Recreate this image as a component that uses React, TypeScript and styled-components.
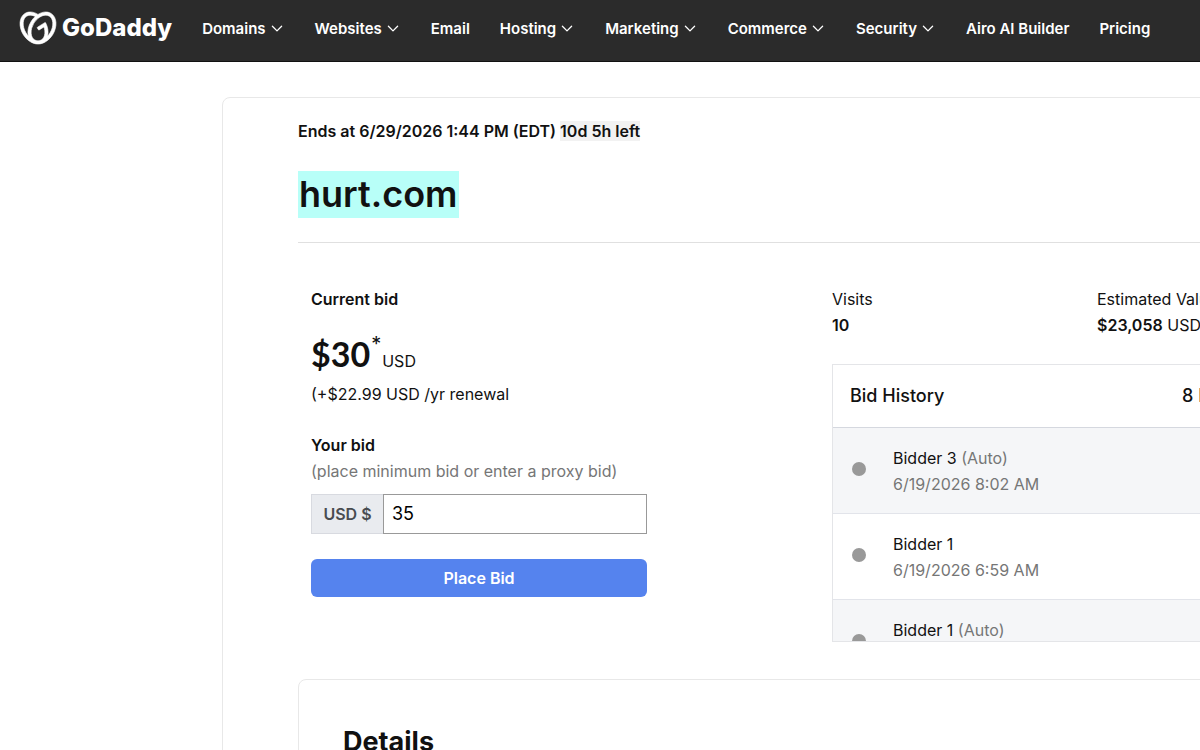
import React from 'react';
import styled, { createGlobalStyle } from 'styled-components';
import { SiGodaddy } from 'react-icons/si';

const GlobalStyle = createGlobalStyle`
  *, *::before, *::after { box-sizing: border-box; }
  body {
    margin: 0;
    background: #fff;
    color: #111;
    font: 400 16px/26px Inter, "Liberation Sans", sans-serif;
  }
  h1, h2, h3, p, ul, dl, dd { margin: 0; padding: 0; }
`;

const Page = styled.div`
  overflow: hidden;
`;

const TopBar = styled.header`
  display: flex;
  align-items: center;
  gap: 30px;
  padding: 10px 20px 15px;
  background: #2b2b2b;
  border-bottom: 1px solid #111;
  color: #fff;
`;

const Brand = styled.a`
  display: flex;
  align-items: center;
  gap: 6px;
  flex: none;
  color: inherit;
  text-decoration: none;
  font: 800 24px/36px Inter, "Liberation Sans", sans-serif;

  & > svg {
    overflow: visible;
    stroke-width: 0.4px;
  }
`;

const NavList = styled.ul`
  display: flex;
  gap: 30px;
  padding-top: 2px;
  list-style: none;
`;

const NavButton = styled.button`
  display: flex;
  align-items: center;
  gap: 3px;
  padding: 0;
  border: 0;
  background: none;
  color: inherit;
  font: 600 15px/26px Inter, "Liberation Sans", sans-serif;
  white-space: nowrap;
  cursor: pointer;
`;

const NavLink = styled.a`
  display: block;
  color: inherit;
  font: 600 15px/26px Inter, "Liberation Sans", sans-serif;
  text-decoration: none;
  white-space: nowrap;
`;

const Card = styled.main`
  min-width: 1194px;
  margin: 35px 0 48px 222px;
  padding: 21px 75px 48px;
  border: 1px solid #e8e8e8;
  border-radius: 8px;
`;

const EndsAt = styled.p`
  font-weight: 600;
  line-height: 24px;
`;

const TimeLeft = styled.span`
  background: #f2f2f2;
`;

const DomainTitle = styled.h1`
  margin: 28px 0 24px;
  font-size: 36px;
  font-weight: 600;
  line-height: 47px;
`;

const Highlight = styled.mark`
  display: inline-block;
  padding: 0 1px;
  background: #b8fff8;
  color: inherit;
`;

const Columns = styled.div`
  display: grid;
  grid-template-columns: 1fr 1fr;
  padding-top: 43px;
  border-top: 1px solid #e0e0e0;
`;

const Column = styled.section`
  padding: 0 13px;
`;

const Label = styled.h2`
  font-size: 16px;
  font-weight: 600;
  line-height: 26px;
`;

const Price = styled.p`
  display: flex;
  align-items: baseline;
  margin: 21px 0 6px;
  line-height: 26px;
`;

const Amount = styled.strong`
  font: 700 34px/42px Lato, "Liberation Sans", sans-serif;
`;

const Star = styled.sup`
  align-self: flex-start;
  margin: 0 1px;
  font-size: 20px;
  line-height: 22px;
`;

const BidForm = styled.form`
  display: flex;
  flex-direction: column;
  max-width: 336px;
  margin-top: 25px;
`;

const BidLabel = styled.label`
  font-weight: 600;
`;

const Hint = styled.span`
  color: #767676;
`;

const InputGroup = styled.div`
  display: flex;
  height: 40px;
  margin: 10px 0 25px;
`;

const Prefix = styled.span`
  flex: none;
  width: 72px;
  border: 1px solid #d8dae0;
  border-right: 0;
  background: #e9ebef;
  color: #484b50;
  font-weight: 600;
  line-height: 38px;
  text-align: center;
`;

const BidInput = styled.input`
  flex: 1;
  min-width: 0;
  padding: 0 8px;
  border: 1px solid #999;
  border-radius: 0;
  background: #fff;
  color: #000;
  font: 400 18px/26px Inter, "Liberation Sans", sans-serif;
`;

const PlaceBid = styled.button`
  height: 38px;
  padding: 0;
  border: 0;
  border-radius: 6px;
  background: #5583ee;
  color: #fff;
  font: 600 16px/26px Inter, "Liberation Sans", sans-serif;
  cursor: pointer;
`;

const Stats = styled.dl`
  display: grid;
  grid-template-columns: 265px 1fr;
`;

const StatValue = styled.dd`
  & > strong { font-weight: 600; }
`;

const History = styled.section`
  margin-top: 26px;
  border: 1px solid #e4e5e8;
`;

const HistoryHead = styled.header`
  display: grid;
  grid-template-columns: 332px 1fr;
  padding: 18px 17px;
  border-bottom: 1px solid #d5d8df;
  font-size: 18px;
  font-weight: 500;
`;

const HistoryTitle = styled.h3`
  font-size: 18px;
  font-weight: 500;
  line-height: 26px;
`;

const BidList = styled.ul`
  height: 213px;
  overflow: hidden;
  list-style: none;
`;

const BidRow = styled.li`
  display: flex;
  align-items: center;
  gap: 27px;
  padding: 17px 19px 16px;
  border-bottom: 1px solid #e2e4ea;

  &:nth-child(odd) { background: #f5f6f8; }
`;

const Dot = styled.span`
  flex: none;
  width: 14px;
  height: 14px;
  margin-bottom: 4px;
  border-radius: 50%;
  background: #999;
`;

const Details = styled.section`
  margin-top: 37px;
  padding: 44px 44px 48px;
  border: 1px solid #e8e8e8;
  border-radius: 8px;
`;

const DetailsTitle = styled.h2`
  font-size: 27px;
  font-weight: 700;
  line-height: 36px;
`;

const Chevron = () => (
  <svg width="16" height="16" viewBox="0 0 16 16" fill="none" stroke="currentColor" strokeWidth="1.3" strokeLinecap="round" strokeLinejoin="round" aria-hidden="true">
    <path d="M3.4 5.3 8 9.9l4.6-4.6" />
  </svg>
);

const navItems = [
  { name: 'Domains', menu: true },
  { name: 'Websites', menu: true },
  { name: 'Email', menu: false },
  { name: 'Hosting', menu: true },
  { name: 'Marketing', menu: true },
  { name: 'Commerce', menu: true },
  { name: 'Security', menu: true },
  { name: 'Airo AI Builder', menu: false },
  { name: 'Pricing', menu: false },
];

const bids = [
  { bidder: 'Bidder 3', auto: true, time: '6/19/2026 8:02 AM' },
  { bidder: 'Bidder 1', auto: false, time: '6/19/2026 6:59 AM' },
  { bidder: 'Bidder 1', auto: true, time: '6/19/2026 6:59 AM' },
];

export default function App() {
  const [bid, setBid] = React.useState('35');

  return (
    <Page>
      <GlobalStyle />
      <TopBar>
        <Brand href="#">
          <SiGodaddy size={36} aria-hidden="true" />
          GoDaddy
        </Brand>
        <nav>
          <NavList>
            {navItems.map((item) => (
              <li key={item.name}>
                {item.menu ? (
                  <NavButton type="button">
                    {item.name}
                    <Chevron />
                  </NavButton>
                ) : (
                  <NavLink href="#">{item.name}</NavLink>
                )}
              </li>
            ))}
          </NavList>
        </nav>
      </TopBar>
      <Card>
        <EndsAt>
          Ends at 6/29/2026 1:44 PM (EDT) <TimeLeft>10d 5h left</TimeLeft>
        </EndsAt>
        <DomainTitle>
          <Highlight>hurt.com</Highlight>
        </DomainTitle>
        <Columns>
          <Column>
            <Label>Current bid</Label>
            <Price>
              <Amount>$30</Amount>
              <Star>*</Star>
              <span>USD</span>
            </Price>
            <p>(+$22.99 USD /yr renewal</p>
            <BidForm onSubmit={(e) => e.preventDefault()}>
              <BidLabel htmlFor="bid">Your bid</BidLabel>
              <Hint id="bid-hint">(place minimum bid or enter a proxy bid)</Hint>
              <InputGroup>
                <Prefix>USD $</Prefix>
                <BidInput
                  id="bid"
                  inputMode="numeric"
                  aria-describedby="bid-hint"
                  value={bid}
                  onChange={(e) => setBid(e.target.value)}
                />
              </InputGroup>
              <PlaceBid type="submit">Place Bid</PlaceBid>
            </BidForm>
          </Column>
          <Column>
            <Stats>
              <div>
                <dt>Visits</dt>
                <StatValue><strong>10</strong></StatValue>
              </div>
              <div>
                <dt>Estimated Value</dt>
                <StatValue><strong>$23,058</strong> USD</StatValue>
              </div>
            </Stats>
            <History>
              <HistoryHead>
                <HistoryTitle>Bid History</HistoryTitle>
                <span>8 Bids</span>
              </HistoryHead>
              <BidList>
                {bids.map((b, i) => (
                  <BidRow key={i}>
                    <Dot />
                    <div>
                      <div>{b.bidder} {b.auto && <Hint>(Auto)</Hint>}</div>
                      <Hint>{b.time}</Hint>
                    </div>
                  </BidRow>
                ))}
              </BidList>
            </History>
          </Column>
        </Columns>
        <Details>
          <DetailsTitle>Details</DetailsTitle>
        </Details>
      </Card>
    </Page>
  );
}
